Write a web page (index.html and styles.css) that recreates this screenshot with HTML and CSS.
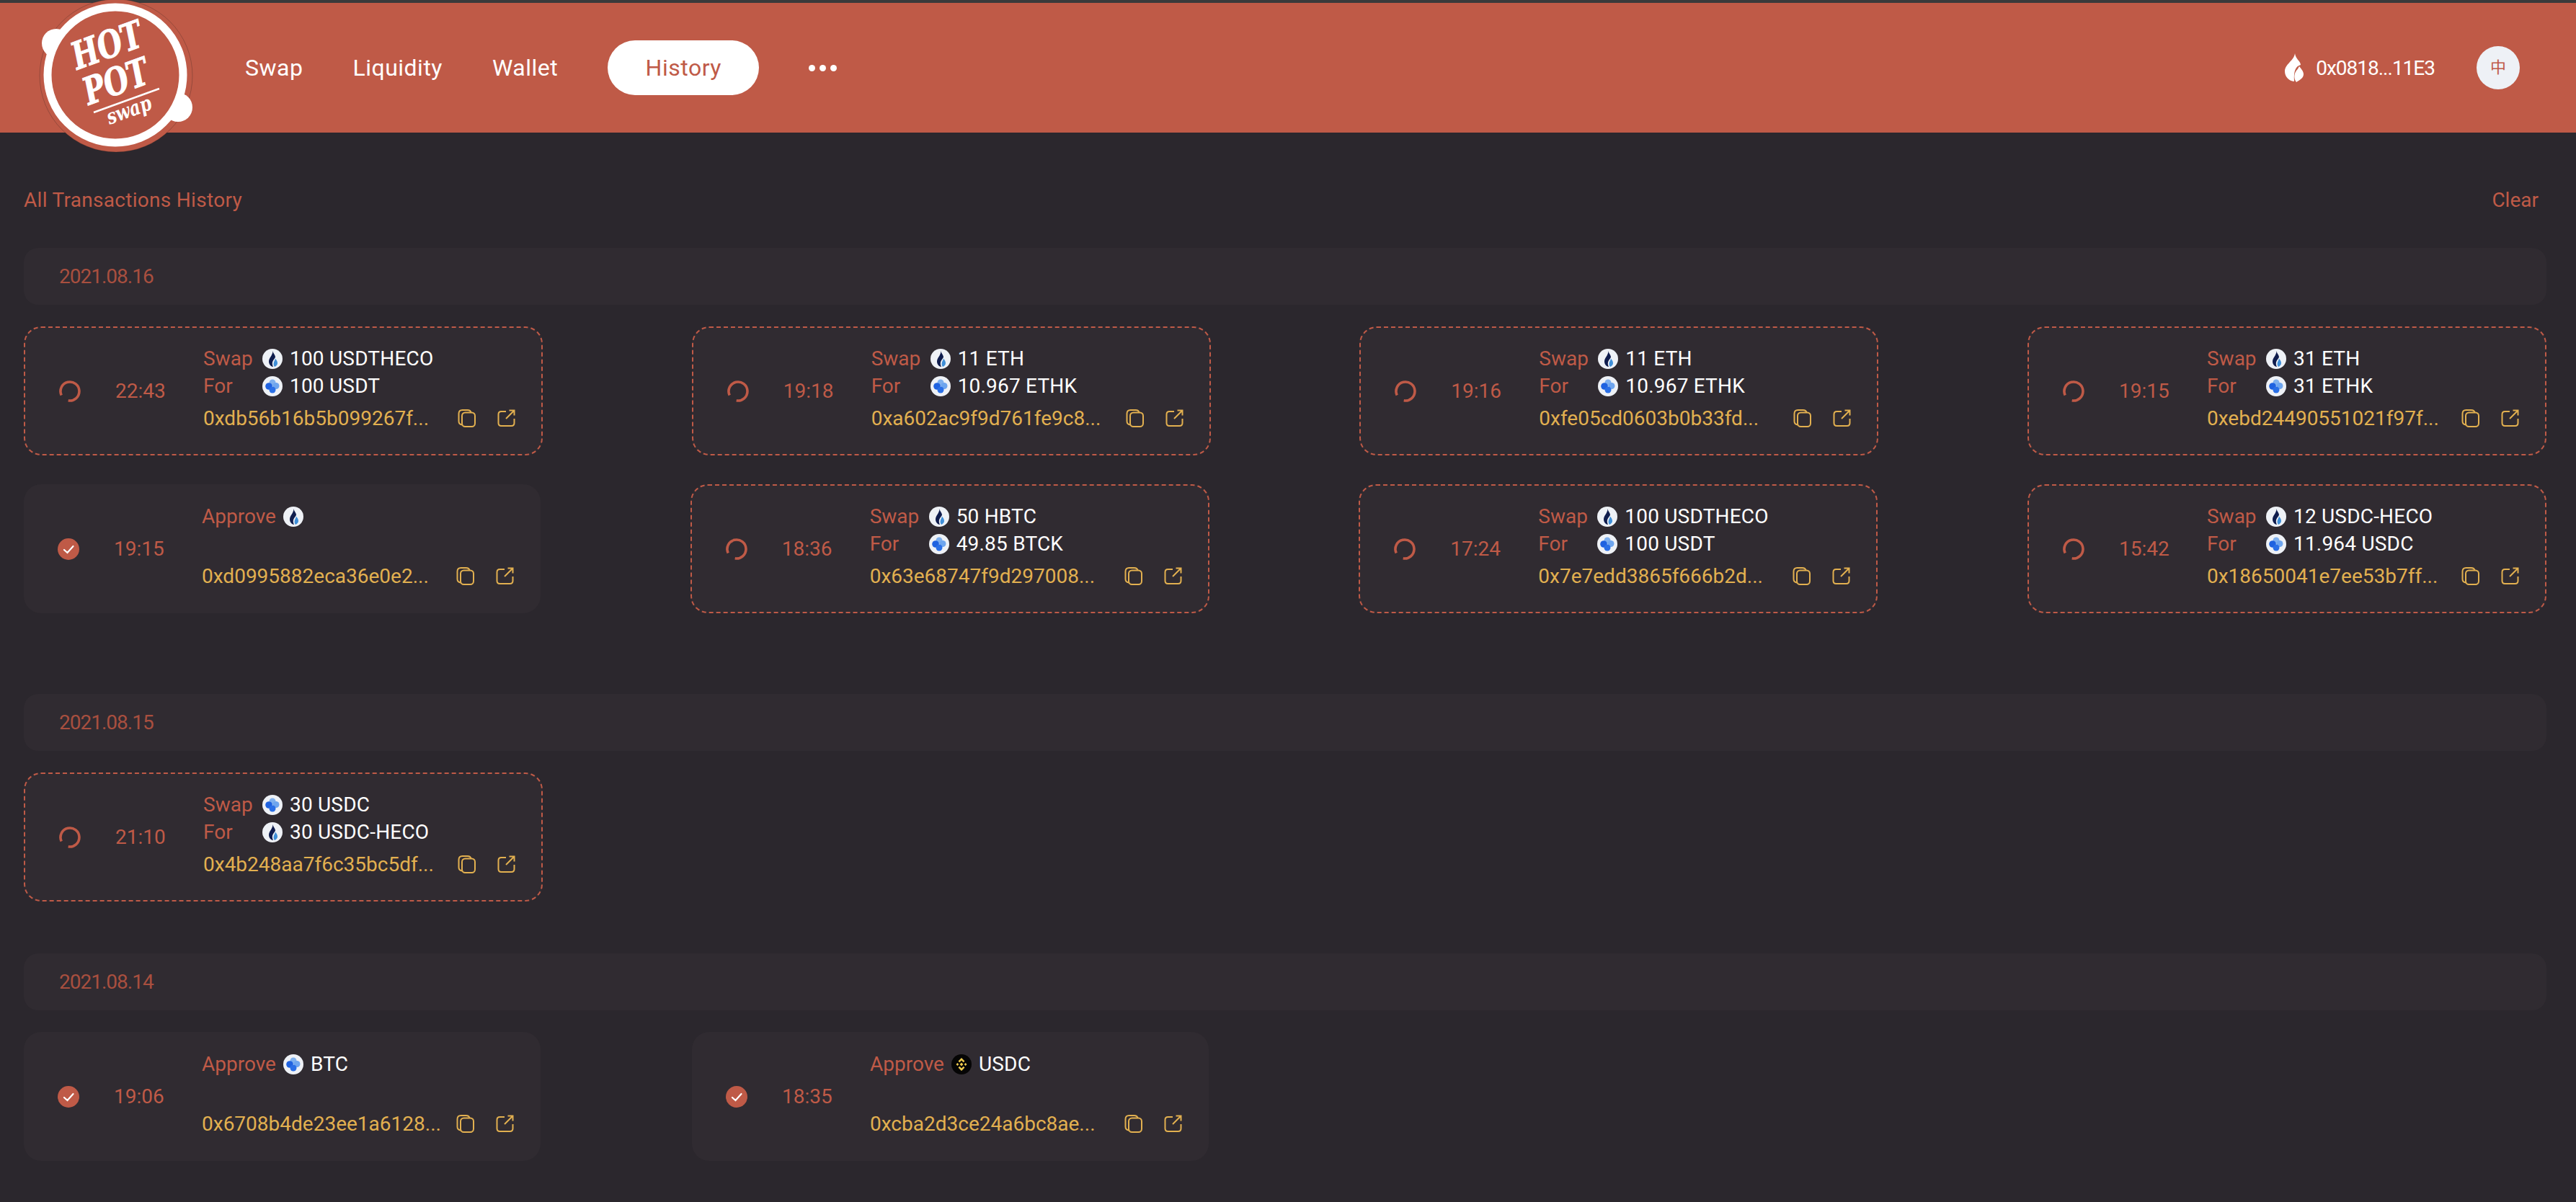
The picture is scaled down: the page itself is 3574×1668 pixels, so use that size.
FILE: index.html
```html
<!DOCTYPE html>
<html lang="en">
<head>
    <meta charset="UTF-8">
    <title>HotPot Swap - History</title>
    <link rel="stylesheet" href="styles.css">
</head>
<body>
    <svg class="sprite" width="0" height="0">
        <symbol id="ht" viewBox="0 0 28 28">
            <circle cx="14" cy="14" r="14" fill="#eef1f6"/>
            <path d="M14.500 3c.5 3.500 3.500 5.500 3.500 8.500-.5 2-3 3.500-4 7-.5 2.500 0 4.500 1 6.500-3.500-.5-6-3.500-6-7.500 0-5 5.500-8.500 5.500-14.500z" fill="#0f1c4d"/>
            <path d="M18 13.500c1.500 2 3 3.500 3 6.500 0 2.500-2 4-4 5-1.500-2-1.800-4-1-6.500.7-1.800 1.700-3 2-5z" fill="#3f8fd8"/>
        </symbol>
        <symbol id="heco" viewBox="0 0 28 28">
            <circle cx="14" cy="14" r="14" fill="#eef1f6"/>
            <circle cx="14" cy="9" r="4.500" fill="#7fb0ee"/>
            <circle cx="19" cy="13.500" r="4.500" fill="#6ea5ee"/>
            <circle cx="9" cy="14" r="4.800" fill="#1f62e0"/>
            <circle cx="14" cy="19" r="4.500" fill="#2a6fe6"/>
        </symbol>
        <symbol id="bnb" viewBox="0 0 28 28">
            <circle cx="14" cy="14" r="14" fill="#050505"/>
            <path d="M14 5l4.500 4.500-1.800 1.800L14 8.600l-2.700 2.700-1.800-1.800zM14 23l-4.500-4.500 1.800-1.800 2.700 2.700 2.700-2.700 1.800 1.800zM6.500 14l1.900-1.900 1.900 1.900-1.900 1.900zM17.700 14l1.900-1.900 1.900 1.900-1.900 1.900zM14 11.600l2.400 2.400-2.400 2.400-2.400-2.400z" fill="#f0cb4e"/>
        </symbol>
        <symbol id="spin" viewBox="0 0 30 30">
            <path d="M3.200 20.500A13 13 0 1 1 12.700 27.800" fill="none" stroke="#bf5a47" stroke-width="3.600"/>
        </symbol>
        <symbol id="done" viewBox="0 0 30 30">
            <circle cx="15" cy="15" r="15" fill="#bf5a47"/>
            <path d="M9 16l4.500 4 8-9" fill="none" stroke="#fff" stroke-width="2.200" stroke-linecap="round"/>
        </symbol>
        <symbol id="copy" viewBox="0 0 25 25">
            <path d="M6 21.500c-2.500-.5-4.500-2-4.500-5V6c0-3 2-5 5-5h7c2.500 0 4.500 1 5 3.500" fill="none" stroke="#e2b050" stroke-width="2"/>
            <rect x="6" y="4.500" width="18" height="19.500" rx="4.500" fill="none" stroke="#e2b050" stroke-width="2"/>
        </symbol>
        <symbol id="open" viewBox="0 0 25 25">
            <path d="M12 3H5.500C3 3 1.500 4.500 1.500 7v12c0 2.500 1.500 4 4 4h14c2.500 0 4-1.500 4-4v-6M12 13L23 2M16.500 1.500h7v7" fill="none" stroke="#e2b050" stroke-width="2"/>
        </symbol>
    </svg>

    <header class="topbar">
        <svg class="logo" viewBox="0 0 240 210" width="240" height="210">
            <circle cx="121" cy="105" r="106" fill="#bf5a47" stroke="#1f1a1c" stroke-opacity=".25" stroke-width="1"/>
            <circle cx="38" cy="60" r="20" fill="#fff"/>
            <circle cx="207" cy="149" r="20" fill="#fff"/>
            <circle cx="120" cy="104" r="94" fill="#bf5a47" stroke="#fff" stroke-width="11"/>
            <text class="logo-big" transform="translate(67 97) rotate(-20) scale(.76 1)">HOT</text>
            <text class="logo-big" transform="translate(83 146) rotate(-20) scale(.76 1)">POT</text>
            <line x1="90" y1="156" x2="181" y2="123" stroke="#fff" stroke-width="2.500"/>
            <text class="logo-small" transform="translate(112 173) rotate(-20) scale(.8 1)">swap</text>
        </svg>
        <nav class="nav">
            <a class="nav-link">Swap</a>
            <a class="nav-link">Liquidity</a>
            <a class="nav-link">Wallet</a>
            <a class="nav-link active">History</a>
            <span class="nav-more"><i></i><i></i><i></i></span>
        </nav>
        <div class="account">
            <svg class="flame" viewBox="0 0 26 40" width="26" height="40">
                <path d="M14 0C15 8 22 11 22 16 15 18 12 24 13 39 5 38 0 32 0 25 0 15 13 10 14 0z" fill="#fff"/>
                <path d="M20 18C23 22 26 25 26 29 26 34 21 37 16 40 12 35 13 28 16 24 18 22 19 20 20 18z" fill="#fff"/>
            </svg>
            <span class="address">0x0818...11E3</span>
            <span class="lang">中</span>
        </div>
    </header>

    <main class="content">
        <div class="page-head">
            <span>All Transactions History</span>
            <span class="clear">Clear</span>
        </div>

        <section class="group group-first">
            <div class="date-bar">2021.08.16</div>
            <div class="row">
                <div class="card pending">
                    <svg class="status"><use href="#spin"/></svg>
                    <span class="time">22:43</span>
                    <div class="info">
                        <div class="line"><span class="label">Swap</span><svg class="token"><use href="#ht"/></svg><span class="amount">100 USDTHECO</span></div>
                        <div class="line"><span class="label">For</span><svg class="token"><use href="#heco"/></svg><span class="amount">100 USDT</span></div>
                        <div class="hash-line"><span class="hash">0xdb56b16b5b099267f...</span><svg class="act"><use href="#copy"/></svg><svg class="act"><use href="#open"/></svg></div>
                    </div>
                </div>
                <div class="card pending">
                    <svg class="status"><use href="#spin"/></svg>
                    <span class="time">19:18</span>
                    <div class="info">
                        <div class="line"><span class="label">Swap</span><svg class="token"><use href="#ht"/></svg><span class="amount">11 ETH</span></div>
                        <div class="line"><span class="label">For</span><svg class="token"><use href="#heco"/></svg><span class="amount">10.967 ETHK</span></div>
                        <div class="hash-line"><span class="hash">0xa602ac9f9d761fe9c8...</span><svg class="act"><use href="#copy"/></svg><svg class="act"><use href="#open"/></svg></div>
                    </div>
                </div>
                <div class="card pending">
                    <svg class="status"><use href="#spin"/></svg>
                    <span class="time">19:16</span>
                    <div class="info">
                        <div class="line"><span class="label">Swap</span><svg class="token"><use href="#ht"/></svg><span class="amount">11 ETH</span></div>
                        <div class="line"><span class="label">For</span><svg class="token"><use href="#heco"/></svg><span class="amount">10.967 ETHK</span></div>
                        <div class="hash-line"><span class="hash">0xfe05cd0603b0b33fd...</span><svg class="act"><use href="#copy"/></svg><svg class="act"><use href="#open"/></svg></div>
                    </div>
                </div>
                <div class="card pending">
                    <svg class="status"><use href="#spin"/></svg>
                    <span class="time">19:15</span>
                    <div class="info">
                        <div class="line"><span class="label">Swap</span><svg class="token"><use href="#ht"/></svg><span class="amount">31 ETH</span></div>
                        <div class="line"><span class="label">For</span><svg class="token"><use href="#heco"/></svg><span class="amount">31 ETHK</span></div>
                        <div class="hash-line"><span class="hash">0xebd24490551021f97f...</span><svg class="act"><use href="#copy"/></svg><svg class="act"><use href="#open"/></svg></div>
                    </div>
                </div>
            </div>
            <div class="row">
                <div class="card approve">
                    <svg class="status"><use href="#done"/></svg>
                    <span class="time">19:15</span>
                    <div class="info">
                        <div class="line"><span class="label-auto">Approve</span><svg class="token"><use href="#ht"/></svg></div>
                        <div class="line"></div>
                        <div class="hash-line"><span class="hash">0xd0995882eca36e0e2...</span><svg class="act"><use href="#copy"/></svg><svg class="act"><use href="#open"/></svg></div>
                    </div>
                </div>
                <div class="card pending">
                    <svg class="status"><use href="#spin"/></svg>
                    <span class="time">18:36</span>
                    <div class="info">
                        <div class="line"><span class="label">Swap</span><svg class="token"><use href="#ht"/></svg><span class="amount">50 HBTC</span></div>
                        <div class="line"><span class="label">For</span><svg class="token"><use href="#heco"/></svg><span class="amount">49.85 BTCK</span></div>
                        <div class="hash-line"><span class="hash">0x63e68747f9d297008...</span><svg class="act"><use href="#copy"/></svg><svg class="act"><use href="#open"/></svg></div>
                    </div>
                </div>
                <div class="card pending">
                    <svg class="status"><use href="#spin"/></svg>
                    <span class="time">17:24</span>
                    <div class="info">
                        <div class="line"><span class="label">Swap</span><svg class="token"><use href="#ht"/></svg><span class="amount">100 USDTHECO</span></div>
                        <div class="line"><span class="label">For</span><svg class="token"><use href="#heco"/></svg><span class="amount">100 USDT</span></div>
                        <div class="hash-line"><span class="hash">0x7e7edd3865f666b2d...</span><svg class="act"><use href="#copy"/></svg><svg class="act"><use href="#open"/></svg></div>
                    </div>
                </div>
                <div class="card pending">
                    <svg class="status"><use href="#spin"/></svg>
                    <span class="time">15:42</span>
                    <div class="info">
                        <div class="line"><span class="label">Swap</span><svg class="token"><use href="#ht"/></svg><span class="amount">12 USDC-HECO</span></div>
                        <div class="line"><span class="label">For</span><svg class="token"><use href="#heco"/></svg><span class="amount">11.964 USDC</span></div>
                        <div class="hash-line"><span class="hash">0x18650041e7ee53b7ff...</span><svg class="act"><use href="#copy"/></svg><svg class="act"><use href="#open"/></svg></div>
                    </div>
                </div>
            </div>
        </section>

        <section class="group">
            <div class="date-bar">2021.08.15</div>
            <div class="row">
                <div class="card pending">
                    <svg class="status"><use href="#spin"/></svg>
                    <span class="time">21:10</span>
                    <div class="info">
                        <div class="line"><span class="label">Swap</span><svg class="token"><use href="#heco"/></svg><span class="amount">30 USDC</span></div>
                        <div class="line"><span class="label">For</span><svg class="token"><use href="#ht"/></svg><span class="amount">30 USDC-HECO</span></div>
                        <div class="hash-line"><span class="hash">0x4b248aa7f6c35bc5df...</span><svg class="act"><use href="#copy"/></svg><svg class="act"><use href="#open"/></svg></div>
                    </div>
                </div>
            </div>
        </section>

        <section class="group">
            <div class="date-bar">2021.08.14</div>
            <div class="row row-left">
                <div class="card approve">
                    <svg class="status"><use href="#done"/></svg>
                    <span class="time">19:06</span>
                    <div class="info">
                        <div class="line"><span class="label-auto">Approve</span><svg class="token"><use href="#heco"/></svg><span class="amount">BTC</span></div>
                        <div class="line"></div>
                        <div class="hash-line"><span class="hash">0x6708b4de23ee1a6128...</span><svg class="act"><use href="#copy"/></svg><svg class="act"><use href="#open"/></svg></div>
                    </div>
                </div>
                <div class="card approve">
                    <svg class="status"><use href="#done"/></svg>
                    <span class="time">18:35</span>
                    <div class="info">
                        <div class="line"><span class="label-auto">Approve</span><svg class="token"><use href="#bnb"/></svg><span class="amount">USDC</span></div>
                        <div class="line"></div>
                        <div class="hash-line"><span class="hash">0xcba2d3ce24a6bc8ae...</span><svg class="act"><use href="#copy"/></svg><svg class="act"><use href="#open"/></svg></div>
                    </div>
                </div>
            </div>
        </section>
    </main>
</body>
</html>
```

FILE: styles.css
```css
* {
    box-sizing: border-box;
}
html, body {
    margin: 0;
    background-color: #2b272d;
}
body {
    font-family: Roboto, "Noto Sans CJK SC", sans-serif;
    font-size: 28px;
    color: #bf5a47;
    height: 1668px;
    overflow: hidden;
}
.sprite {
    position: absolute;
}

/* top bar */
.topbar {
    display: flex;
    align-items: center;
    height: 184px;
    border-top: 4px solid #3a3a3b;
    background-color: #bf5a47;
}
.logo {
    align-self: flex-start;
    flex: none;
    margin: -4px 0 -30px 40px;
    overflow: visible;
}
.logo-big {
    font-family: "DejaVu Serif", serif;
    font-weight: bold;
    font-style: italic;
    font-size: 52px;
    fill: #fff;
    stroke: #fff;
    stroke-width: 1px;
}
.logo-small {
    font-family: "DejaVu Serif", serif;
    font-weight: bold;
    font-style: italic;
    font-size: 29px;
    fill: #fff;
}
.nav {
    display: flex;
    align-items: center;
    gap: 69px;
    margin-left: 60px;
    font-size: 32px;
    letter-spacing: .5px;
    color: #fff;
}
.nav-link.active {
    display: block;
    width: 210px;
    height: 76px;
    line-height: 76px;
    text-align: center;
    border-radius: 38px;
    background-color: #fff;
    color: #bf5a47;
}
.nav-more {
    display: flex;
    gap: 6px;
}
.nav-more i {
    width: 9px;
    height: 9px;
    border-radius: 50%;
    background-color: #fff;
}
.account {
    display: flex;
    align-items: center;
    margin-left: auto;
    margin-right: 78px;
    color: #fff;
}
.address {
    margin-left: 17px;
    font-size: 28px;
    letter-spacing: -1px;
}
.lang {
    width: 60px;
    height: 60px;
    line-height: 60px;
    margin-left: 58px;
    text-align: center;
    border-radius: 50%;
    background-color: #eef1f6;
    color: #bf5a47;
    font-size: 22px;
}

/* history */
.content {
    padding: 0 41px 0 33px;
}
.page-head {
    display: flex;
    justify-content: space-between;
    height: 160px;
    padding-top: 77px;
    padding-right: 11px;
    letter-spacing: .3px;
}
.clear {
    letter-spacing: 0;
}
.group {
    margin-bottom: 72px;
}
.group-first {
    margin-bottom: 112px;
}
.date-bar {
    height: 79px;
    line-height: 79px;
    padding-left: 49px;
    margin-bottom: 30px;
    border-radius: 20px;
    background-color: #302b31;
    color: #a84f3f;
    letter-spacing: -1px;
}
.row {
    display: flex;
    justify-content: space-between;
    margin-bottom: 40px;
}
.row-left {
    justify-content: flex-start;
    gap: 210px;
}

/* transaction card */
.card {
    display: flex;
    align-items: center;
    height: 179px;
    border-radius: 24px;
    background-color: #302b31;
}
.card.pending {
    width: 720px;
    padding-left: 49px;
    border: 2px dashed #bf5a47;
}
.card.approve {
    width: 717px;
    padding-left: 47px;
}
.status {
    flex: none;
    width: 30px;
    height: 30px;
}
.pending .status {
    margin-left: -2px;
}
.time {
    flex: none;
    width: 122px;
    margin-left: 48px;
}
.info {
    flex: 1;
    min-width: 0;
    margin-top: -7px;
}
.line {
    display: flex;
    align-items: center;
    height: 38px;
}
.label {
    width: 82px;
}
.label-auto {
    margin-right: 10px;
}
.token {
    flex: none;
    width: 28px;
    height: 28px;
}
.amount {
    margin-left: 10px;
    color: #fff;
    letter-spacing: .2px;
}
.hash-line {
    display: flex;
    align-items: center;
    height: 38px;
    margin-top: 7px;
}
.hash {
    width: 353px;
    color: #e2b050;
}
.act {
    flex: none;
    width: 25px;
    height: 25px;
    margin-right: 30px;
}
```
